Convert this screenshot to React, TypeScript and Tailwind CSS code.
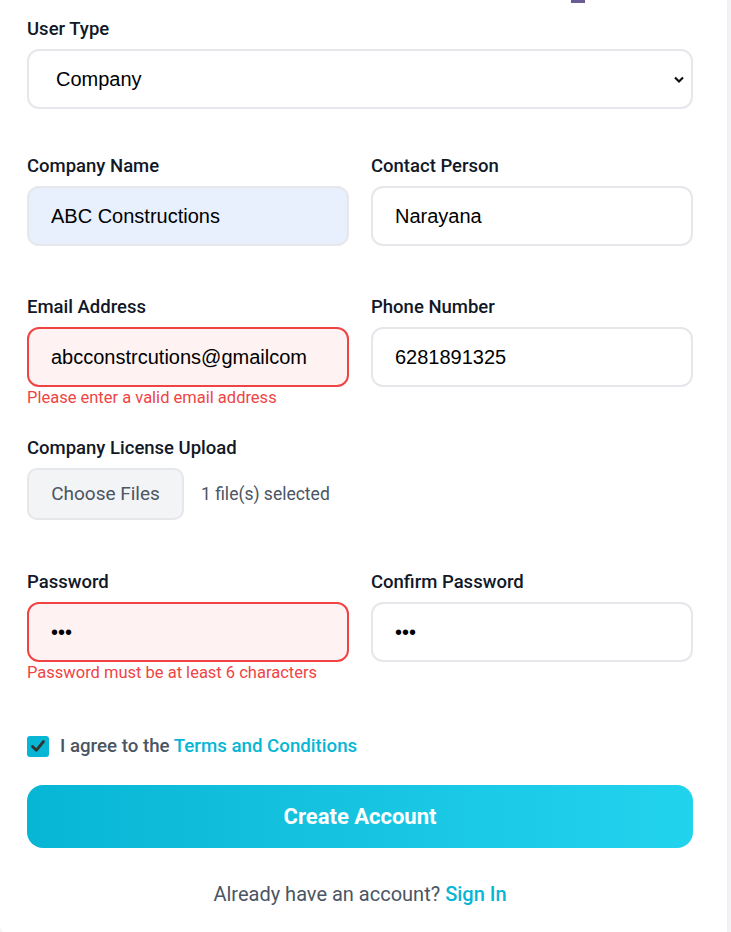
import { useState } from 'react'

const labelCls = 'block text-[18.5px] leading-[26px] font-medium text-[#111827] mb-[7px]'
const inputBase =
  'w-full h-[60px] rounded-xl border-2 px-[22px] text-[20px] text-black outline-none'
const inputFont = { fontFamily: '"Liberation Sans", Arial, sans-serif' }

function Field({
  label,
  value,
  type = 'text',
  tone = 'normal',
  error,
}: {
  label: string
  value: string
  type?: string
  tone?: 'normal' | 'error' | 'autofill'
  error?: string
}) {
  const toneCls =
    tone === 'error'
      ? 'border-[#ef4444] bg-[#fef2f2]'
      : tone === 'autofill'
        ? 'border-[#e5e7eb] bg-[#e8f0fe]'
        : 'border-[#e5e7eb] bg-white'
  return (
    <div>
      <label className={labelCls}>{label}</label>
      <input
        type={type}
        defaultValue={value}
        className={`${inputBase} ${toneCls}`}
        style={inputFont}
      />
      {error && <p className="text-[16.5px] leading-[22px] text-[#ef4444]">{error}</p>}
    </div>
  )
}

export default function App() {
  const [agree, setAgree] = useState(true)

  return (
    <div className="min-h-[932px] bg-[#f5f5f7]" style={{ fontFamily: 'Roboto, "Noto Sans", sans-serif' }}>
      <div className="relative w-[727px] min-h-[934px] bg-white rounded-bl-lg shadow-[1px_0_5px_rgba(0,0,0,0.04)] px-[27px] pt-4 pb-6">
        {/* cut-off icon from the section above */}
        <div className="absolute left-[571px] top-0 w-[14px] h-[3px] bg-[#6b5b95]" />

        <div className="w-[666px]">
          <label className={labelCls}>User Type</label>
          <div className="relative">
            <select
              defaultValue="company"
              className="w-full h-[60px] appearance-none rounded-xl border-2 border-[#e5e7eb] bg-white px-[27px] text-[20px] text-black outline-none"
              style={inputFont}
            >
              <option value="individual">Individual</option>
              <option value="company">Company</option>
            </select>
            <svg
              className="pointer-events-none absolute right-[8px] top-[27px]"
              width="12"
              height="8"
              viewBox="0 0 12 8"
            >
              <path d="M2 1.5l4 4 4-4" fill="none" stroke="#111" strokeWidth="2.2" />
            </svg>
          </div>

          <div className="mt-[44px] grid grid-cols-2 gap-x-[22px]">
            <Field label="Company Name" value="ABC Constructions" tone="autofill" />
            <Field label="Contact Person" value="Narayana" />
          </div>

          <div className="mt-[48px] grid grid-cols-2 gap-x-[22px] items-start">
            <Field
              label="Email Address"
              value="abcconstrcutions@gmailcom"
              tone="error"
              error="Please enter a valid email address"
            />
            <Field label="Phone Number" value="6281891325" />
          </div>

          <div className="mt-[26px]">
            <label className={labelCls}>Company License Upload</label>
            <div className="mt-[4px] flex items-center gap-[17px]">
              <button className="h-[52px] w-[157px] rounded-[10px] border-2 border-[#e5e7eb] bg-[#f3f4f6] text-[19px] text-[#4b5563]">
                Choose Files
              </button>
              <span className="text-[17.5px] text-[#4b5563]">1 file(s) selected</span>
            </div>
          </div>

          <div className="mt-[49px] grid grid-cols-2 gap-x-[22px] items-start">
            <Field
              label="Password"
              value="•••"
              type="password"
              tone="error"
              error="Password must be at least 6 characters"
            />
            <Field label="Confirm Password" value="•••" type="password" />
          </div>

          <label className="mt-[48px] flex h-[28px] items-center gap-[11px] cursor-pointer">
            <input
              type="checkbox"
              checked={agree}
              onChange={(e) => setAgree(e.target.checked)}
              className="sr-only"
            />
            <span className="flex h-[21px] w-[22px] items-center justify-center rounded-[3px] bg-[#06b6d4]">
              {agree && (
                <svg width="16" height="14" viewBox="0 0 16 14">
                  <path
                    d="M2.5 7.5l3.8 3.8L13.5 2.5"
                    fill="none"
                    stroke="#333"
                    strokeWidth="2.8"
                    strokeLinecap="round"
                    strokeLinejoin="round"
                  />
                </svg>
              )}
            </span>
            <span className="text-[18.7px] font-medium text-[#4b5563]">
              I agree to the <a className="text-[#06b6d4]">Terms and Conditions</a>
            </span>
          </label>

          <button className="mt-[25px] h-[63px] w-full rounded-2xl bg-gradient-to-r from-[#06b6d4] to-[#22d3ee] text-[22px] font-bold text-white">
            Create Account
          </button>

          <p className="mt-[31px] text-center text-[20px] leading-[30px] text-[#4b5563]">
            Already have an account? <a className="font-medium text-[#06b6d4]">Sign In</a>
          </p>
        </div>
      </div>
    </div>
  )
}
